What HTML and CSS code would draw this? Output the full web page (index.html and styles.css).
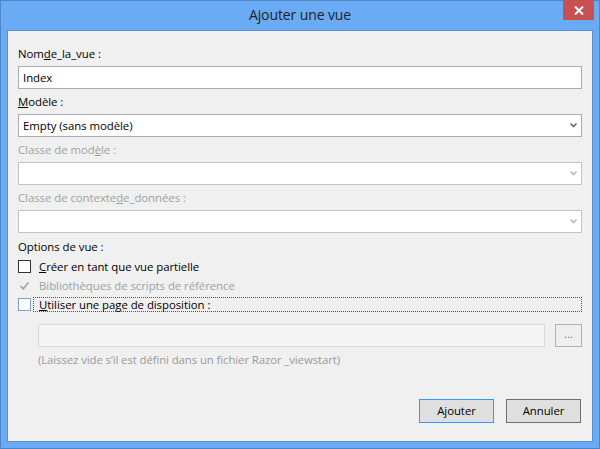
FILE: index.html
```html
<!DOCTYPE html>
<html lang="fr">
<head>
<meta charset="utf-8">
<title>Ajouter une vue</title>
<link rel="stylesheet" href="styles.css">
</head>
<body>
<div class="window">
  <div class="titlebar">
    <span class="spacer"></span>
    <span class="title">Ajouter une vue</span>
    <span class="tb-right"><span class="close"><svg width="10" height="9" viewBox="0 0 10 9"><path d="M1 0.5 L9 8.5 M9 0.5 L1 8.5" stroke="#fff" stroke-width="2"/></svg></span></span>
  </div>
  <div class="client">
    <div class="field">
      <div class="label">Nom<u>d</u>e_la_vue :</div>
      <div class="input">Index</div>
    </div>
    <div class="field">
      <div class="label"><u>M</u>odèle :</div>
      <div class="input combo"><span>Empty (sans modèle)</span><svg class="chev" width="7" height="5" viewBox="0 0 7 5"><path d="M0.5 0.5 L3.5 3.5 L6.5 0.5" fill="none" stroke="#555" stroke-width="1.3"/></svg></div>
    </div>
    <div class="field disabled">
      <div class="label">Classe de mod<u>è</u>le :</div>
      <div class="input combo"><span></span><svg class="chev" width="7" height="5" viewBox="0 0 7 5"><path d="M0.5 0.5 L3.5 3.5 L6.5 0.5" fill="none" stroke="#b0b0b0" stroke-width="1.3"/></svg></div>
    </div>
    <div class="field disabled">
      <div class="label">Classe de contexte<u>d</u>e_données :</div>
      <div class="input combo"><span></span><svg class="chev" width="7" height="5" viewBox="0 0 7 5"><path d="M0.5 0.5 L3.5 3.5 L6.5 0.5" fill="none" stroke="#b0b0b0" stroke-width="1.3"/></svg></div>
    </div>
    <div class="options-label">Options de vue :</div>
    <div class="check-row">
      <span class="box"></span>
      <span class="check-text"><u>C</u>réer en tant que vue partielle</span>
    </div>
    <div class="check-row disabled">
      <span class="box checked"><svg width="11" height="10" viewBox="0 0 11 10"><path d="M1.5 5 L4.2 7.8 L9.5 1.5" fill="none" stroke="#a8a8a8" stroke-width="1.8"/></svg></span>
      <span class="check-text">Bibliothèques de scripts de référence</span>
    </div>
    <div class="check-row focus-row">
      <span class="box focused"></span>
      <span class="check-text focus"><u>U</u>tiliser une page de disposition :</span>
    </div>
    <div class="path-row">
      <div class="path-input"></div>
      <div class="browse">...</div>
    </div>
    <div class="hint">(Laissez vide s’il est défini dans un fichier Razor _viewstart)</div>
    <div class="footer">
      <div class="btn default">Ajouter</div>
      <div class="btn">Annuler</div>
    </div>
  </div>
</div>
</body>
</html>
```
FILE: styles.css
```css
html, body {
  margin: 0;
  padding: 0;
  background: #6aabf5;
}
body {
  font-family: "Segoe UI", "Open Sans", "Noto Sans", sans-serif;
  font-size: 11.4px;
  letter-spacing: -0.05px;
  color: #000;
}
.window {
  width: 600px;
  height: 449px;
  box-sizing: border-box;
  border: 1px solid #4f86c6;
  background: #6aabf5;
  display: flex;
  flex-direction: column;
}
.titlebar {
  height: 29px;
  display: grid;
  grid-template-columns: 1fr auto 1fr;
  align-items: start;
}
.title {
  font-size: 14px;
  letter-spacing: -0.1px;
  color: #222;
  line-height: 27px;
}
.tb-right {
  display: flex;
  justify-content: flex-end;
  padding-right: 5px;
}
.close {
  width: 31px;
  height: 20px;
  margin-top: -1px;
  background: #c75050;
  display: flex;
  align-items: center;
  justify-content: center;
}
.client {
  flex: 1;
  margin: 0 6px 6px 6px;
  border: 1px solid #5b8fd0;
  background: #f0f0f0;
  padding: 15px 10px 0 10px;
  display: flex;
  flex-direction: column;
}
.field {
  margin-bottom: 5px;
}
.label {
  line-height: 16px;
  height: 16px;
  margin-bottom: 4px;
  white-space: nowrap;
}
.input {
  height: 23px;
  box-sizing: border-box;
  border: 1px solid #abadb3;
  background: #fff;
  padding: 0 4px;
  line-height: 21px;
  display: flex;
  align-items: center;
  justify-content: space-between;
}
.field.disabled .label {
  color: #a0a0a0;
}
.field.disabled .input {
  border-color: #c4c4c4;
}
.options-label {
  margin-top: 1px;
  line-height: 16px;
  height: 16px;
  margin-bottom: 2px;
}
.check-row {
  display: flex;
  align-items: center;
  height: 19px;
}
.check-row.disabled {
  color: #a0a0a0;
}
.box {
  width: 13px;
  height: 13px;
  box-sizing: border-box;
  border: 1px solid #333;
  background: #fff;
  flex: none;
  display: flex;
  align-items: center;
  justify-content: center;
}
.box.checked {
  border-color: #f0f0f0;
  background: #f0f0f0;
}
.box.focused {
  border-color: #7d9fd2;
}
.check-text {
  margin-left: 8px;
  line-height: 15px;
}
.focus-row .check-text {
  margin-left: 2px;
  padding-left: 5px;
  flex: 1;
  border: 1px dotted #555;
  line-height: 13px;
}
.path-row {
  display: flex;
  margin-top: 10px;
  padding-left: 20px;
  height: 23px;
}
.path-input {
  width: 507px;
  box-sizing: border-box;
  border: 1px solid #d9d9d9;
  background: #f5f5f5;
}
.browse {
  margin-left: 10px;
  width: 27px;
  box-sizing: border-box;
  border: 1px solid #adb2b5;
  background: #efefef;
  color: #777;
  text-align: center;
  line-height: 18px;
}
.hint {
  padding-left: 20px;
  color: #9a9a9a;
  margin-top: 5px;
  line-height: 16px;
  letter-spacing: -0.1px;
}
.footer {
  margin-top: auto;
  margin-bottom: 18px;
  display: flex;
  justify-content: flex-end;
  gap: 12px;
  padding-right: 1px;
}
.btn {
  width: 75px;
  height: 24px;
  box-sizing: border-box;
  border: 1px solid #707070;
  background: #dfdfdf;
  text-align: center;
  line-height: 22px;
}
.btn.default {
  border-color: #3399ff;
}
```
